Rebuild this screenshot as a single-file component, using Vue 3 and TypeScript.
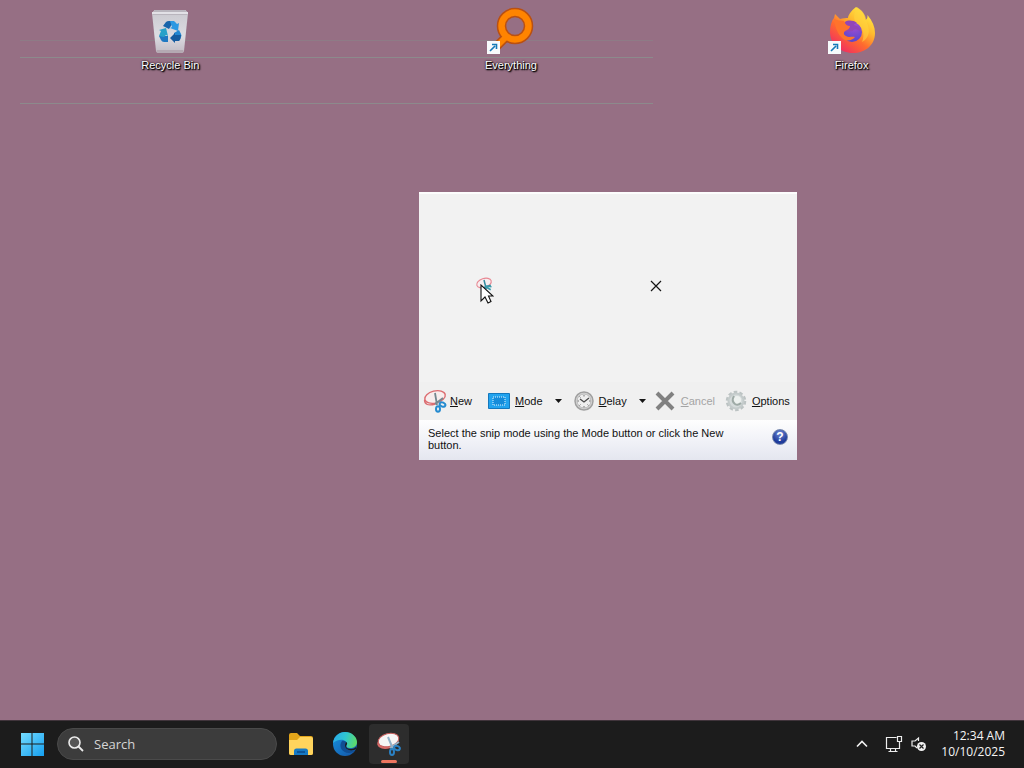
<script setup lang="ts">
import { ref } from 'vue'

interface Shortcut {
  id: string
  label: string
  linked: boolean
}

const shortcuts: Shortcut[] = [
  { id: 'bin', label: 'Recycle Bin', linked: false },
  { id: 'everything', label: 'Everything', linked: true },
  { id: 'firefox', label: 'Firefox', linked: true },
]
const query = ref('')
</script>

<template>
  <div class="screen">
    <main class="desktop">
      <div class="trail" aria-hidden="true"></div>
      <nav class="shortcuts" aria-label="Desktop">
        <button v-for="s in shortcuts" :key="s.id" type="button" class="shortcut">
          <span class="picture">
            <svg v-if="s.id === 'bin'" width="48" height="48" viewBox="0 0 48 48">
              <defs>
                <linearGradient id="binBody" x1="0" y1="0" x2="0" y2="1">
                  <stop offset="0" stop-color="#c9c8ce" />
                  <stop offset="0.6" stop-color="#dcdce2" />
                  <stop offset="1" stop-color="#c2bcc4" />
                </linearGradient>
              </defs>
              <path d="M6 7 8.500 4h31L42 7l-4 38q-.3 2-2.500 2h-23q-2.200 0-2.500-2z" fill="url(#binBody)" />
              <path d="M6 7 9 4h30l3 3-1 2H7z" fill="#b9b5bd" />
              <path d="M6 7h36" stroke="#f1f1f4" stroke-width="1.500" />
              <path d="M10.500 44h27l-.5 2q-.5 1-2 1H13q-1.500 0-2-1z" fill="#b4a9b2" />
              <path d="m17 20 3-4q1-1 3-1h5l-5 8z" fill="#1764aa" />
              <path d="m24 15h3q2 0 3 2l1 1 2-1-1 8-8-3 2-1z" fill="#2c98e2" />
              <path d="m28 27 5-3 2 4q1 2 0 3l-2 4h-5z" fill="#2287d2" />
              <path d="M33 35h-4v2l-5-5 5-5v2h6q0 4-2 6z" fill="#155b9f" />
              <path d="M22 30v6h-4q-2 0-3-2l-2-4z" fill="#1f78c2" />
              <path d="m13 30 2-5-2-1 7-2 2 8-2-1-2 2z" fill="#27a1c9" />
            </svg>
            <svg v-else-if="s.id === 'everything'" width="48" height="48" viewBox="0 0 48 48">
              <path d="M19 31 6 44" stroke="#b95012" stroke-width="9" />
              <circle cx="28" cy="20" r="13.500" fill="none" stroke="#b95012" stroke-width="9.500" />
              <path d="M20 30 6 44" stroke="#ff8400" stroke-width="6" />
              <circle cx="28" cy="20" r="13.500" fill="none" stroke="#ff8400" stroke-width="6.500" />
            </svg>
            <svg v-else width="48" height="48" viewBox="0 0 48 48">
              <defs>
                <linearGradient id="foxFire" x1="0.85" y1="0.05" x2="0.2" y2="0.95">
                  <stop offset="0" stop-color="#fff044" />
                  <stop offset="0.35" stop-color="#ffb92e" />
                  <stop offset="0.62" stop-color="#ff6b2e" />
                  <stop offset="1" stop-color="#f02b64" />
                </linearGradient>
                <radialGradient id="foxGlobe" cx="0.6" cy="0.2" r="0.9">
                  <stop offset="0" stop-color="#a64ed0" />
                  <stop offset="1" stop-color="#4c45cf" />
                </radialGradient>
              </defs>
              <path d="M28 1c7 4 9 8 9.500 13 2-1 2-3 2-5 5 6 7.500 12 7.500 18 0 12-9.500 20-22 20S2 38 2 26c0-6 1.500-11 4-14l1-4 5 5c3-1 6-1 8-1 0-3 4-8 8-11z" fill="url(#foxFire)" />
              <path d="M29 1c8 5 9 10 10 16 4 9 1 16-5 19 3-7 1-13-3-16-5-4-7-9-2-19z" fill="#ffd33d" opacity="0.6" />
              <circle cx="24" cy="26" r="10" fill="url(#foxGlobe)" />
              <path d="M17 16c3-2 8-2 12 1-2 0-3 1-3 2 4 1 6 3 7 7-4-4-8-3-8-1l-9 1c-2-3-1-7 1-10z" fill="#9346b8" />
              <path d="M6 13c3 1 6 2 10 2 1 3 3 5 6 5 0 2-2 4-5 5-2 2-1 4 1 5 3 2 6 0 9 1-3 4-9 5-13 1-5-5-7-12-8-19z" fill="#ff732c" />
            </svg>
            <svg v-if="s.linked" class="badge" width="13" height="13" viewBox="0 0 13 13">
              <path d="M0 0h13v13H0z" fill="#f7fafc" />
              <path d="m3 10 5-5M5 3.500h4.500V8" fill="none" stroke="#1479b8" stroke-width="1.600" />
            </svg>
          </span>
          <span class="caption">{{ s.label }}</span>
        </button>
      </nav>

      <section class="window" aria-label="Snipping Tool">
        <header class="titlebar">
          <svg width="18" height="18" viewBox="0 0 24 24">
            <ellipse cx="12" cy="8" rx="10" ry="6" transform="rotate(-18 12 8)" fill="#f7eef0" stroke="#e88893" stroke-width="1.500" />
            <path d="m12 4 3 12m6-5-9 3" stroke="#338ca0" stroke-width="2" />
            <path d="m14 12 8 1m-8 0 7 4" stroke="#3b9bab" stroke-width="2" />
          </svg>
          <button type="button" aria-label="Close">
            <svg width="12" height="12" viewBox="0 0 12 12"><path d="m1 1 10 10M11 1 1 11" stroke="#151515" stroke-width="1.200" /></svg>
          </button>
        </header>

        <div class="toolbar">
          <button type="button" class="tool">
            <svg width="24" height="24" viewBox="0 0 24 24">
              <ellipse cx="12" cy="8" rx="10.500" ry="6" transform="rotate(-14 12 8)" fill="#f8eeee" stroke="#dc6c70" stroke-width="1.400" />
              <path d="M1.500 11q0 7 11 4" fill="none" stroke="#dc6c70" stroke-width="1.300" />
              <path d="m12 4 2 12M20 9l-8 6" stroke="#748890" stroke-width="1.800" />
              <ellipse cx="15" cy="20" rx="2" ry="2.800" fill="none" stroke="#258bd0" stroke-width="2" />
              <ellipse cx="19.500" cy="15.500" rx="3" ry="2" transform="rotate(25 19.500 15.500)" fill="none" stroke="#258bd0" stroke-width="2" />
            </svg>
            <span><u>N</u>ew</span>
          </button>
          <button type="button" class="tool mode">
            <svg width="22" height="16" viewBox="0 0 22 16">
              <path d="M.5.5h21v15H.5z" fill="#22a3ee" stroke="#1478bd" />
              <path d="M5 4h12v8H5z" fill="#168cda" stroke="#e2f5ff" stroke-dasharray="1 1" />
            </svg>
            <span><u>M</u>ode</span>
          </button>
          <button type="button" class="drop" aria-label="Mode choices">
            <svg width="7" height="4" viewBox="0 0 7 4"><path d="M0 0h7L3.500 4z" fill="#151515" /></svg>
          </button>
          <button type="button" class="tool">
            <svg width="20" height="20" viewBox="0 0 20 20">
              <circle cx="10" cy="10" r="9" fill="#d8d8d8" stroke="#a0a0a0" stroke-width="1.500" />
              <circle cx="10" cy="10" r="7" fill="#eeeeee" stroke="#b8b8b8" />
              <path d="M10 4v1.500M10 15v1.500M3.500 10H5M15 10h1.500M5.500 5.500l1 1M14.500 14.500l-1-1M5.500 14.500l1-1" stroke="#777" />
              <path d="m6 8 4 3 5-4" fill="none" stroke="#484848" stroke-width="1.300" />
            </svg>
            <span><u>D</u>elay</span>
          </button>
          <button type="button" class="drop" aria-label="Delay choices">
            <svg width="7" height="4" viewBox="0 0 7 4"><path d="M0 0h7L3.500 4z" fill="#151515" /></svg>
          </button>
          <button type="button" class="tool cancel" disabled>
            <svg width="20" height="20" viewBox="0 0 20 20"><path d="m2 2 16 16M18 2 2 18" stroke="#818181" stroke-width="4" /></svg>
            <span><u>C</u>ancel</span>
          </button>
          <button type="button" class="tool options">
            <svg width="22" height="22" viewBox="0 0 22 22">
              <circle cx="11" cy="11" r="9" fill="none" stroke="#bcc3c3" stroke-width="2.500" stroke-dasharray="3.500 2.200" />
              <circle cx="11" cy="11" r="7.500" fill="#d5dbdb" stroke="#c4cbcb" stroke-width="2" />
              <circle cx="12" cy="10" r="4" fill="#edf1ef" />
              <path d="M9 6q-3 5 1 8 3 2 6-1" fill="none" stroke="#9eaaa6" stroke-width="2" />
            </svg>
            <span><u>O</u>ptions</span>
          </button>
        </div>

        <footer class="hint">
          <p>Select the snip mode using the Mode button or click the New button.</p>
          <button type="button" class="help" aria-label="Help">?</button>
        </footer>
      </section>

      <svg class="pointer" width="14" height="21" viewBox="0 0 14 21" aria-hidden="true">
        <path d="M1 1v16l4-4 3 6 3-1.500L8.500 12H13z" fill="#fff" stroke="#111" stroke-width="1.100" />
      </svg>
    </main>

    <footer class="taskbar">
      <button type="button" aria-label="Start">
        <svg width="24" height="24" viewBox="0 0 24 24">
          <defs>
            <linearGradient id="winBlue" x1="0" y1="0" x2="1" y2="1">
              <stop offset="0" stop-color="#74dcff" />
              <stop offset="1" stop-color="#159ff0" />
            </linearGradient>
          </defs>
          <path d="M1 1h10.500v10.500H1zM12.500 1H24v10.500H12.500zM1 12.500h10.500V24H1zM12.500 12.500H24V24H12.500z" fill="url(#winBlue)" />
        </svg>
      </button>
      <label class="search">
        <svg width="16" height="16" viewBox="0 0 16 16">
          <circle cx="6.500" cy="6.500" r="5.500" fill="#555" stroke="#ececec" stroke-width="1.600" />
          <path d="m10.500 10.500 4.500 4.500" stroke="#ececec" stroke-width="1.800" />
        </svg>
        <input v-model="query" type="text" placeholder="Search" aria-label="Search" />
      </label>
      <div class="pinned">
        <button type="button" class="task" aria-label="File Explorer">
          <svg width="26" height="24" viewBox="0 0 26 24">
            <path d="M1 3q0-2 2-2h6l3 3h11q2 0 2 2v15q0 2-2 2H3q-2 0-2-2z" fill="#e3a51a" />
            <path d="M1 8h8l3-3h11q2 0 2 2v14q0 2-2 2H3q-2 0-2-2z" fill="#ffd45d" />
            <path d="M6 23v-4q0-2.500 2.500-2.500h9Q20 16.500 20 19v4z" fill="#1679c4" />
            <path d="M9 20h8" stroke="#0d5598" stroke-width="2" />
          </svg>
        </button>
        <button type="button" class="task" aria-label="Edge">
          <svg width="26" height="26" viewBox="0 0 26 26">
            <defs>
              <linearGradient id="edgeTop" x1="0" y1="0.3" x2="1" y2="0.5">
                <stop offset="0" stop-color="#2aabea" />
                <stop offset="0.5" stop-color="#2fc6d0" />
                <stop offset="1" stop-color="#5edb69" />
              </linearGradient>
              <linearGradient id="edgeLow" x1="0" y1="0" x2="1" y2="1">
                <stop offset="0" stop-color="#1793df" />
                <stop offset="1" stop-color="#1453a5" />
              </linearGradient>
            </defs>
            <circle cx="13" cy="13" r="12" fill="url(#edgeLow)" />
            <path d="M1 12C2 5 7 1 13 1c7 0 12 5 12 10 0 4-3 6-7 6-3 0-4-1-3-3 1-5-7-8-14-2z" fill="url(#edgeTop)" />
            <path d="M10 10c-4 5 0 12 7 12 3 0 5-1 6-3-3 1-7 1-9-2-1-2 0-3 1-4-1-3-3-4-5-3z" fill="#104e94" />
            <path d="M14 11c2 1 1 2 0 4 0 2 2 3 5 3 2 0 4-1 5-2v2c-5 3-11 1-11-4z" fill="#1c1c1c" />
          </svg>
        </button>
        <button type="button" class="task active" aria-label="Snipping Tool">
          <svg width="26" height="24" viewBox="0 0 26 24">
            <ellipse cx="12" cy="10" rx="11" ry="6.500" transform="rotate(-16 12 10)" fill="#d96a67" />
            <ellipse cx="12.500" cy="8" rx="10.500" ry="6.500" transform="rotate(-14 12.500 8)" fill="#f6f5f5" stroke="#c55f5d" />
            <path d="m12 5 5 12M23 10l-9 6" stroke="#91b1c8" stroke-width="2" />
            <ellipse cx="16" cy="20" rx="2" ry="3" fill="none" stroke="#2b81c4" stroke-width="2" />
            <ellipse cx="21" cy="16" rx="3" ry="2" transform="rotate(25 21 16)" fill="none" stroke="#2b81c4" stroke-width="2" />
          </svg>
        </button>
      </div>
      <div class="tray">
        <button type="button" aria-label="Hidden icons">
          <svg width="12" height="8" viewBox="0 0 12 8"><path d="m1 6.500 5-5 5 5" fill="none" stroke="#f2f2f2" stroke-width="1.600" /></svg>
        </button>
        <button type="button" class="network" aria-label="Network">
          <svg width="18" height="18" viewBox="0 0 18 18">
            <path d="M11.500 2.500h-10v11h13V9M5.500 13.500v3M10.500 13.500v3M3.500 16.500h9M12.500 1.500h4v5h-4zM14.500 6.500v4" fill="none" stroke="#ededed" stroke-width="1.200" />
          </svg>
        </button>
        <button type="button" aria-label="Volume">
          <svg width="16" height="16" viewBox="0 0 16 16">
            <path d="M7.500 5V2L4 5H1v5h3l2 2" fill="none" stroke="#ededed" stroke-width="1.200" />
            <circle cx="10.500" cy="10.500" r="4.500" fill="#f2f2f2" />
            <path d="m8.500 8.500 4 4m0-4-4 4" stroke="#222" stroke-width="1.200" />
          </svg>
        </button>
        <button type="button" class="clock">
          <span>12:34 AM</span>
          <span>10/10/2025</span>
        </button>
      </div>
    </footer>
  </div>
</template>

<style>
body {
  margin: 0;
}
</style>

<style scoped>
.screen {
  display: flex;
  flex-direction: column;
  min-height: 100vh;
  background: #966f84;
  font-family: "Liberation Sans", Arial, sans-serif;
}

button {
  border: 0;
  padding: 0;
  background: none;
  color: inherit;
  font: inherit;
}

svg {
  display: block;
  flex: none;
}

.desktop {
  position: relative;
  flex: 1;
}

.trail {
  position: absolute;
  top: 40px;
  left: 20px;
  width: 633px;
  height: 63px;
  border-bottom: 1px solid #8c8a8c;
  background:
    linear-gradient(#8c8a8c, #8c8a8c) 0 17px / 100% 1px no-repeat,
    linear-gradient(#8e7b86, #8e7b86) 0 0 / 100% 1px no-repeat;
}

.shortcuts {
  position: relative;
  display: grid;
  grid-template-columns: repeat(3, 1fr);
  padding: 6px 2px 0 0;
}

.shortcut {
  display: flex;
  flex-direction: column;
  align-items: center;
  gap: 4px;
}

.picture {
  position: relative;
}

.badge {
  position: absolute;
  left: 0;
  bottom: 0;
}

.caption {
  color: #fff;
  font-size: 11px;
  line-height: 14px;
  text-shadow: 1px 1px 1px #000, 1px 1px 2px #000, 0 0 2px #000;
}

.window {
  position: absolute;
  top: 192px;
  left: 419px;
  width: 378px;
  background: #f2f2f2;
  color: #111;
  font-size: 11px;
}

.titlebar {
  display: flex;
  align-items: center;
  justify-content: space-between;
  height: 190px;
  box-sizing: border-box;
  border-top: 2px solid #fdfdfd;
  padding: 0 135px 4px 56px;
}

.toolbar {
  display: flex;
  align-items: center;
  height: 38px;
  padding-left: 4px;
  background: #f0f0f0;
}

.tool {
  display: flex;
  align-items: center;
  gap: 5px;
  white-space: nowrap;
}

.tool:first-child {
  gap: 3px;
}

.mode {
  margin-left: 16px;
}

.drop {
  display: grid;
  place-items: center;
  width: 12px;
  height: 24px;
  margin: 0 9px 0 10px;
}

.cancel {
  gap: 6px;
  margin-left: -3px;
  color: #a4a4a4;
}

.options {
  margin-left: 10px;
}

.hint {
  display: flex;
  align-items: flex-start;
  justify-content: space-between;
  min-height: 40px;
  box-sizing: border-box;
  padding: 7px 9px;
  background: linear-gradient(#fefefe, #f0f1f7 55%, #e4e6ef);
}

.hint p {
  max-width: 310px;
  margin: 0;
  line-height: 12px;
}

.help {
  width: 16px;
  height: 16px;
  margin-top: 2px;
  box-sizing: border-box;
  border: 1px solid #7587ad;
  border-radius: 50%;
  background: radial-gradient(circle at 50% 25%, #718bd6, #203c9c 65%);
  color: #fff;
  font-size: 12px;
  font-weight: bold;
  line-height: 14px;
}

.pointer {
  position: absolute;
  top: 284px;
  left: 480px;
}

.taskbar {
  display: flex;
  align-items: center;
  height: 48px;
  box-sizing: border-box;
  padding: 0 19px 0 20px;
  background: #1c1c1c;
  box-shadow: inset 0 1px #40343b;
  color: #f5f5f5;
  font-family: "Open Sans", "Noto Sans", sans-serif;
}

.search {
  display: flex;
  align-items: center;
  gap: 10px;
  width: 220px;
  height: 32px;
  box-sizing: border-box;
  margin-left: 13px;
  border: 1px solid #4a4a4a;
  border-radius: 16px;
  padding: 0 10px;
  background: #3c3c3c;
}

.search input {
  flex: 1;
  min-width: 0;
  border: 0;
  padding: 0;
  outline: 0;
  background: none;
  color: #f2f2f2;
  font: 13px/18px "Open Sans", "Noto Sans", sans-serif;
}

.search input::placeholder {
  color: #d5d5d5;
  opacity: 1;
}

.pinned {
  display: flex;
  gap: 4px;
  margin-left: 4px;
}

.task {
  position: relative;
  display: grid;
  place-items: center;
  width: 40px;
  height: 40px;
  border-radius: 4px;
}

.active {
  background: #2d2d2d;
}

.active::after {
  content: "";
  position: absolute;
  bottom: 1px;
  left: 12px;
  width: 16px;
  height: 3px;
  border-radius: 2px;
  background: #ee7660;
}

.tray {
  display: flex;
  align-items: center;
  margin-left: auto;
}

.network {
  margin: 0 8px 0 17px;
}

.clock {
  display: flex;
  flex-direction: column;
  align-items: flex-end;
  margin-left: 14px;
  font-size: 12px;
  line-height: 16px;
}
</style>
